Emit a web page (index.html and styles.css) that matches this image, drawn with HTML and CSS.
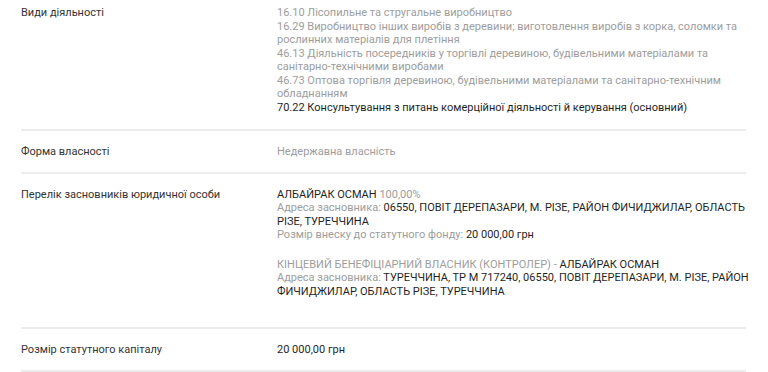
FILE: index.html
```html
<!DOCTYPE html>
<html lang="uk">
<head>
<meta charset="utf-8">
<link rel="stylesheet" href="styles.css">
</head>
<body>
<div class="table">
  <div class="row first">
    <div class="label">Види діяльності</div>
    <div class="value">
      <div class="muted">16.10 Лісопильне та стругальне виробництво</div>
      <div class="muted">16.29 Виробництво інших виробів з деревини; виготовлення виробів з корка, соломки та рослинних матеріалів для плетіння</div>
      <div class="muted">46.13 Діяльність посередників у торгівлі деревиною, будівельними матеріалами та санітарно-технічними виробами</div>
      <div class="muted">46.73 Оптова торгівля деревиною, будівельними матеріалами та санітарно-технічним обладнанням</div>
      <div class="dark">70.22 Консультування з питань комерційної діяльності й керування (основний)</div>
    </div>
  </div>
  <div class="row">
    <div class="label">Форма власності</div>
    <div class="value muted">Недержавна власність</div>
  </div>
  <div class="row founders">
    <div class="label">Перелік засновників юридичної особи</div>
    <div class="value">
      <div class="block">
        <div><span class="dark">АЛБАЙРАК ОСМАН</span> <span class="muted">100,00%</span></div>
        <div><span class="muted">Адреса засновника:</span> <span class="dark">06550, ПОВІТ ДЕРЕПАЗАРИ, М. РІЗЕ, РАЙОН ФИЧИДЖИЛАР, ОБЛАСТЬ РІЗЕ, ТУРЕЧЧИНА</span></div>
        <div><span class="muted">Розмір внеску до статутного фонду:</span> <span class="dark">20 000,00 грн</span></div>
      </div>
      <div class="block">
        <div><span class="muted">КІНЦЕВИЙ БЕНЕФІЦІАРНИЙ ВЛАСНИК (КОНТРОЛЕР) -</span> <span class="dark">АЛБАЙРАК ОСМАН</span></div>
        <div><span class="muted">Адреса засновника:</span> <span class="dark">ТУРЕЧЧИНА, ТР М 717240, 06550, ПОВІТ ДЕРЕПАЗАРИ, М. РІЗЕ, РАЙОН ФИЧИДЖИЛАР, ОБЛАСТЬ РІЗЕ, ТУРЕЧЧИНА</span></div>
      </div>
    </div>
  </div>
  <div class="row">
    <div class="label">Розмір статутного капіталу</div>
    <div class="value dark">20 000,00 грн</div>
  </div>
</div>
</body>
</html>
```
FILE: styles.css
```css
html, body {
  margin: 0;
  padding: 0;
  background: #ffffff;
}
body {
  font-family: Roboto, "Noto Sans", sans-serif;
  font-size: 11px;
  line-height: 13.5px;
  color: #212121;
}
.table {
  width: 725px;
  margin-left: 21px;
}
.row {
  display: grid;
  grid-template-columns: 256px 1fr;
  padding: 14px 0 13px 0;
  border-bottom: 2px solid #ececec;
}
.row.first {
  padding-top: 6px;
  padding-bottom: 15px;
}
.label {
  color: #333333;
}
.value {
  margin-right: -8px;
}
.muted {
  color: #9d9d9d;
}
.dark {
  color: #1f1f1f;
}
.block {
  margin-bottom: 16px;
}
.block:last-child {
  margin-bottom: 16px;
}
```
